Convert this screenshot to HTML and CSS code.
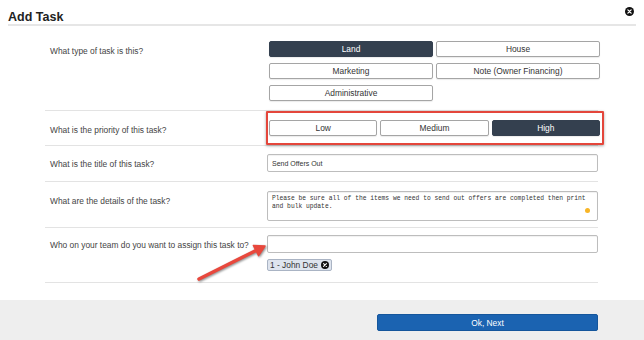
FILE: index.html
```html
<!DOCTYPE html>
<html lang="en">
<head>
    <meta charset="UTF-8">
    <meta name="viewport" content="width=device-width, initial-scale=1.0">
    <title>Add Task</title>
    <link rel="stylesheet" href="styles.css">
</head>
<body>
    <div class="modal">
        <div class="modal-header">
            <h1>Add Task</h1>
            <button class="close-btn" aria-label="Close">
                <svg width="9" height="9" viewBox="0 0 10 10">
                    <circle cx="5" cy="5" r="5" fill="#111"/>
                    <path d="M3.2 3.2 L6.8 6.8 M6.8 3.2 L3.2 6.8" stroke="#fff" stroke-width="1.4" stroke-linecap="round"/>
                </svg>
            </button>
        </div>

        <div class="modal-body">
            <div class="row row-type">
                <div class="row-label">What type of task is this?</div>
                <div class="row-control">
                    <div class="choice-grid">
                        <button class="choice active">Land</button>
                        <button class="choice">House</button>
                        <button class="choice">Marketing</button>
                        <button class="choice">Note (Owner Financing)</button>
                        <button class="choice">Administrative</button>
                    </div>
                </div>
            </div>

            <div class="row row-priority">
                <div class="row-label">What is the priority of this task?</div>
                <div class="row-control">
                    <div class="priority-grid">
                        <button class="choice">Low</button>
                        <button class="choice">Medium</button>
                        <button class="choice active">High</button>
                        <span class="highlight-box"></span>
                    </div>
                </div>
            </div>

            <div class="row row-title">
                <div class="row-label">What is the title of this task?</div>
                <div class="row-control">
                    <input class="text-input" type="text" value="Send Offers Out">
                </div>
            </div>

            <div class="row row-details">
                <div class="row-label">What are the details of the task?</div>
                <div class="row-control details-wrap">
                    <textarea class="details-input">Please be sure all of the items we need to send out offers are completed then print and bulk update.</textarea>
                    <span class="status-dot"></span>
                </div>
            </div>

            <div class="row row-assign">
                <div class="row-label">Who on your team do you want to assign this task to?</div>
                <div class="row-control">
                    <input class="text-input" type="text" value="">
                    <div class="chip-list">
                        <span class="chip">1 - John Doe
                            <svg width="8" height="8" viewBox="0 0 10 10">
                                <circle cx="5" cy="5" r="5" fill="#111"/>
                                <path d="M3.2 3.2 L6.8 6.8 M6.8 3.2 L3.2 6.8" stroke="#fff" stroke-width="1.4" stroke-linecap="round"/>
                            </svg>
                        </span>
                    </div>
                </div>
            </div>
        </div>

        <div class="modal-footer">
            <button class="next-btn">Ok, Next</button>
        </div>

        <!-- annotation arrow pointing at the assign field -->
        <svg class="pointer-arrow" width="644" height="340" viewBox="0 0 644 340">
            <g class="arrow-shape">
                <line x1="199" y1="279" x2="256" y2="250.5" stroke="#e8483d" stroke-width="3.6" stroke-linecap="round"/>
                <polygon points="265,246 258.6,255.6 253.4,245.4" fill="#e8483d" stroke="#e8483d" stroke-width="1.5" stroke-linejoin="round"/>
            </g>
        </svg>
    </div>
</body>
</html>
```

FILE: styles.css
```css
body {
    margin: 0;
    font-family: 'Liberation Sans', Arial, sans-serif;
    background-color: white;
    color: #444;
}
.modal {
    position: relative;
    width: 644px;
    height: 340px;
    display: flex;
    flex-direction: column;
    overflow: hidden;
}
.modal-header {
    display: flex;
    justify-content: space-between;
    align-items: flex-start;
    margin: 0 8px;
    height: 24px;
    border-bottom: 2px solid #e6e6e6;
}
.modal-header h1 {
    margin: 10px 0 0;
    font-size: 12.5px;
    line-height: 14px;
    font-weight: bold;
    color: #222;
}
.close-btn {
    margin: 7px 2px 0 0;
    padding: 0;
    border: none;
    background: none;
    line-height: 0;
    cursor: pointer;
}
.modal-body {
    padding: 7px 46px 0 45px;
}
.row {
    display: flex;
    align-items: flex-start;
}
.row + .row {
    border-top: 1px solid #e3e3e3;
}
.row-label {
    width: 222px;
    flex-shrink: 0;
    box-sizing: border-box;
    padding: 5px 0 0 5px;
    font-size: 8.4px;
    line-height: 10px;
    color: #444;
}
.row-control {
    flex: 1;
    min-width: 0;
}
.row-type {
    padding: 8px 0 9px;
}
.row-priority {
    padding: 9px 0 9px;
}
.row-title {
    padding: 8px 0 9px;
}
.row-details {
    padding: 9px 0 6px;
}
.row-assign {
    padding: 7px 0 11px;
    border-bottom: 1px solid #e3e3e3;
}
.choice-grid {
    display: grid;
    grid-template-columns: 1fr 1fr;
    gap: 6px 3px;
    margin: 0 -2px 0 2px;
}
.priority-grid {
    position: relative;
    display: grid;
    grid-template-columns: 1fr 1fr 1fr;
    gap: 3px;
    margin: 0 -2px 0 2px;
}
.choice {
    height: 16px;
    padding: 0;
    border: 1px solid #a5a5a5;
    border-radius: 2px;
    background-color: white;
    color: #333;
    font-family: inherit;
    font-size: 8.4px;
    box-shadow: 0 1px 1px rgba(0,0,0,0.08);
    cursor: pointer;
}
.choice.active {
    background-color: #34404f;
    border-color: #34404f;
    color: white;
}
.highlight-box {
    position: absolute;
    left: -3px;
    top: -9px;
    right: -4px;
    bottom: -9px;
    border: 2px solid #e4463b;
    border-radius: 1px;
    box-shadow: 0 1px 3px rgba(0,0,0,0.35);
    pointer-events: none;
}
.text-input {
    display: block;
    width: 100%;
    height: 18px;
    box-sizing: border-box;
    padding: 0 4px;
    border: 1px solid #bdbdbd;
    border-radius: 2px;
    box-shadow: inset 0 1px 1px rgba(0,0,0,0.06);
    font-family: inherit;
    font-size: 7px;
    color: #333;
    outline: none;
}
.details-wrap {
    position: relative;
}
.details-input {
    display: block;
    width: 100%;
    height: 30px;
    box-sizing: border-box;
    padding: 3px 4px;
    border: 1px solid #bdbdbd;
    border-radius: 2px;
    box-shadow: inset 0 1px 1px rgba(0,0,0,0.06);
    font-family: 'Liberation Mono', 'DejaVu Sans Mono', monospace;
    font-size: 6.3px;
    line-height: 8px;
    color: #333;
    resize: none;
    overflow: hidden;
    outline: none;
}
.status-dot {
    position: absolute;
    right: 8px;
    top: 17px;
    width: 5px;
    height: 5px;
    border-radius: 50%;
    background-color: #f8b526;
}
.chip-list {
    display: flex;
    margin-top: 6px;
}
.chip {
    display: inline-flex;
    align-items: center;
    gap: 3px;
    height: 12px;
    box-sizing: border-box;
    padding: 0 2px 0 2px;
    border: 1px solid #aab4c4;
    border-radius: 2px;
    background-color: #dee4ee;
    font-size: 8.4px;
    color: #333;
}
.modal-footer {
    margin-top: auto;
    height: 40px;
    box-sizing: border-box;
    padding: 14px 46px 0 0;
    display: flex;
    justify-content: flex-end;
    align-items: flex-start;
    background-color: #eeeeee;
}
.next-btn {
    width: 221px;
    height: 17px;
    padding: 0;
    border: 1px solid #15569c;
    border-radius: 2px;
    background-color: #1b63b1;
    color: white;
    font-family: inherit;
    font-size: 8.4px;
    cursor: pointer;
}
.pointer-arrow {
    position: absolute;
    left: 0;
    top: 0;
    pointer-events: none;
}
.arrow-shape {
    filter: drop-shadow(1px 1px 1px rgba(0,0,0,0.45));
}
```
